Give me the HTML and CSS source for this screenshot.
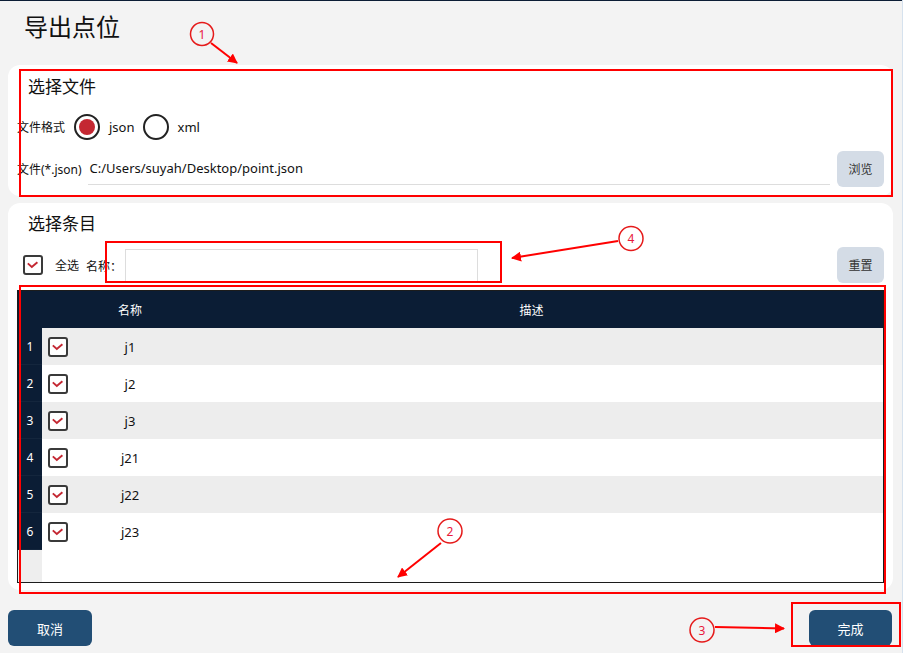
FILE: index.html
```html
<!DOCTYPE html>
<html lang="zh-CN">
<head>
    <meta charset="UTF-8">
    <meta name="viewport" content="width=device-width, initial-scale=1.0">
    <title>导出点位</title>
    <link rel="stylesheet" href="styles.css">
</head>
<body>
<div class="app">
    <div class="topbar"></div>
    <h1 class="title">导出点位</h1>

    <div class="card card-file">
        <div class="card-title">选择文件</div>
        <div class="row row-format">
            <span class="label">文件格式</span>
            <span class="radio checked"><span class="dot"></span></span>
            <span class="opt">json</span>
            <span class="radio"></span>
            <span class="opt">xml</span>
        </div>
        <div class="row row-path">
            <span class="label">文件(*.json)</span>
            <div class="path">C:/Users/suyah/Desktop/point.json</div>
            <div class="btn btn-light">浏览</div>
        </div>
    </div>

    <div class="card card-items">
        <div class="card-title">选择条目</div>
        <div class="row row-filter">
            <span class="check all">
                <svg viewBox="0 0 20 20"><polyline points="3.5,8 8.5,12.5 15.5,6.5"/></svg>
            </span>
            <span class="label lbl-all">全选</span>
            <span class="label lbl-name">名称：</span>
            <div class="search"></div>
            <div class="btn btn-light btn-reset">重置</div>
        </div>

        <div class="grid">
            <div class="grid-head">
                <div class="cell num"></div>
                <div class="cell"></div>
                <div class="cell name">名称</div>
                <div class="cell desc">描述</div>
            </div>
            <div class="grid-body" id="rows"></div>
            <div class="grid-fill">
                <div class="cell num"></div>
                <div class="cell"></div>
            </div>
        </div>
    </div>

    <div class="footer">
        <div class="btn btn-dark btn-cancel">取消</div>
        <div class="btn btn-dark btn-done">完成</div>
    </div>

    <!-- annotation layer -->
    <svg class="marks" viewBox="0 0 903 653">
        <defs>
            <marker id="head" viewBox="0 0 10 10" refX="9" refY="5" markerWidth="5" markerHeight="5" orient="auto">
                <path d="M0,0 L10,5 L0,10 z" fill="#f00"/>
            </marker>
        </defs>
        <rect class="box" x="20" y="70" width="872" height="126"/>
        <rect class="box" x="106" y="242" width="395" height="40"/>
        <rect class="box" x="20" y="286" width="865" height="307"/>
        <rect class="box" x="792" y="603" width="108" height="43"/>

        <circle class="ring" cx="202" cy="34" r="11.5"/>
        <text class="tag" x="202" y="38.5">1</text>
        <line class="arrow" x1="211" y1="43" x2="237" y2="63"/>

        <circle class="ring" cx="450" cy="531" r="12"/>
        <text class="tag" x="450" y="535.5">2</text>
        <line class="arrow" x1="441" y1="543" x2="398" y2="577"/>

        <circle class="ring" cx="702" cy="630" r="12"/>
        <text class="tag" x="702" y="634.5">3</text>
        <line class="arrow" x1="715" y1="627" x2="784" y2="628.5"/>

        <circle class="ring" cx="631" cy="238.5" r="12"/>
        <text class="tag" x="631" y="243">4</text>
        <line class="arrow" x1="618" y1="241" x2="512" y2="258"/>
    </svg>
</div>

<script>
    const items = ['j1', 'j2', 'j3', 'j21', 'j22', 'j23'];
    const rows = document.getElementById('rows');

    items.forEach((name, i) => {
        const row = document.createElement('div');
        row.className = 'grid-row' + (i % 2 === 0 ? ' odd' : '');
        row.innerHTML =
            '<div class="cell num">' + (i + 1) + '</div>' +
            '<div class="cell pick"><span class="check"><svg viewBox="0 0 20 20"><polyline points="3.5,8 8.5,12.5 15.5,6.5"/></svg></span></div>' +
            '<div class="cell name">' + name + '</div>' +
            '<div class="cell desc"></div>';
        rows.appendChild(row);
    });
</script>
</body>
</html>
```

FILE: styles.css
```css
body {
    margin: 0;
    background-color: #f3f3f3;
    font-family: "Noto Sans", "Noto Sans CJK SC", sans-serif;
    color: #111;
}
.app {
    position: relative;
    width: 902px;
    height: 653px;
    border-right: 1px solid #d6e2ee;
    display: flex;
    flex-direction: column;
    overflow: hidden;
}
.topbar {
    height: 1px;
    background-color: #0b1d35;
}
.title {
    margin: 0 0 22px 0;
    padding: 10px 0 0 24px;
    height: 32px;
    line-height: 32px;
    font-size: 24px;
    font-weight: normal;
}

/* cards */
.card {
    margin-left: 8px;
    width: 885px;
    box-sizing: border-box;
    background-color: #fff;
    border-radius: 12px;
    padding: 10px 9px 9px 9px;
}
.card-title {
    padding-left: 11px;
    height: 24px;
    line-height: 24px;
    font-size: 17px;
}
.row {
    display: flex;
    align-items: center;
}
.label {
    font-size: 12px;
    white-space: nowrap;
}
.row-format {
    margin-top: 13px;
    height: 30px;
    gap: 9px;
}
.radio {
    width: 26px;
    height: 26px;
    box-sizing: border-box;
    border: 2px solid #222;
    border-radius: 50%;
    display: flex;
    align-items: center;
    justify-content: center;
}
.radio .dot {
    width: 16px;
    height: 16px;
    border-radius: 50%;
    background-color: #c42732;
}
.opt {
    font-size: 13px;
    margin-right: -1px;
}
.row-path {
    margin-top: 9px;
    height: 36px;
}
.path {
    flex: 1;
    align-self: flex-start;
    margin: 0 7px 0 6px;
    padding-left: 2px;
    height: 33px;
    line-height: 35px;
    font-size: 13px;
    border-bottom: 1px solid #ddd;
}

/* buttons */
.btn {
    display: flex;
    align-items: center;
    justify-content: center;
    height: 36px;
    border-radius: 6px;
    font-size: 12px;
    box-sizing: border-box;
}
.btn-light {
    width: 47px;
    background-color: #d4dce6;
    color: #333;
}
.btn-dark {
    background-color: #224e75;
    color: #fff;
    font-size: 13px;
}

/* items card */
.card-items {
    margin-top: 7px;
    padding: 9px 9px 7px 9px;
}
.row-filter {
    margin-top: 11px;
    height: 36px;
}
.check {
    width: 20px;
    height: 20px;
    box-sizing: border-box;
    border: 2px solid #3a3a3a;
    border-radius: 3px;
    background-color: #fff;
    display: flex;
}
.check svg {
    width: 100%;
    height: 100%;
}
.check polyline {
    fill: none;
    stroke: #c42732;
    stroke-width: 2.4;
}
.check.all {
    margin-left: 6px;
}
.lbl-all {
    margin-left: 12px;
}
.lbl-name {
    margin-left: 7px;
    font-family: "Noto Sans CJK SC", sans-serif;
}
.search {
    margin-left: 3px;
    width: 353px;
    height: 33px;
    box-sizing: border-box;
    border: 1px solid #ddd;
}
.btn-reset {
    margin-left: auto;
}

/* table */
.grid {
    margin-top: 7px;
    height: 293px;
    box-sizing: border-box;
    border: 1px solid #1c1c1c;
    display: flex;
    flex-direction: column;
}
.grid-head,
.grid-row,
.grid-fill {
    display: grid;
    grid-template-columns: 24px 38px 100px 1fr;
}
.grid-head {
    height: 37px;
    background-color: #0b1d35;
    color: #fff;
    font-size: 12px;
}
.grid-row {
    height: 37px;
    background-color: #fff;
    font-size: 13px;
}
.grid-row.odd {
    background-color: #ededed;
}
.cell {
    display: flex;
    align-items: center;
}
.cell.name,
.cell.desc {
    justify-content: center;
}
.cell.num {
    justify-content: center;
    background-color: #0b1d35;
    color: #fff;
    font-size: 12px;
}
.grid-row .cell.num {
    border-bottom: 1px solid #14263d;
    box-sizing: border-box;
}
.cell.pick {
    padding-left: 6px;
}
.grid-fill {
    flex: 1;
    background-color: #fff;
}
.grid-fill .cell.num {
    background-color: #eee;
}

/* footer */
.footer {
    margin-top: 20px;
    padding: 0 10px 0 8px;
    display: flex;
    justify-content: space-between;
}
.btn-cancel {
    width: 84px;
}
.btn-done {
    width: 83px;
}

/* annotations */
.marks {
    position: absolute;
    left: 0;
    top: 0;
    width: 903px;
    height: 653px;
    pointer-events: none;
}
.box {
    fill: none;
    stroke: #f00;
    stroke-width: 2;
}
.ring {
    fill: none;
    stroke: #e51a1a;
    stroke-width: 1.5;
}
.tag {
    fill: #e8193c;
    font-family: "Noto Sans", sans-serif;
    font-size: 12px;
    text-anchor: middle;
}
.arrow {
    stroke: #f00;
    stroke-width: 2;
    marker-end: url(#head);
}
```
